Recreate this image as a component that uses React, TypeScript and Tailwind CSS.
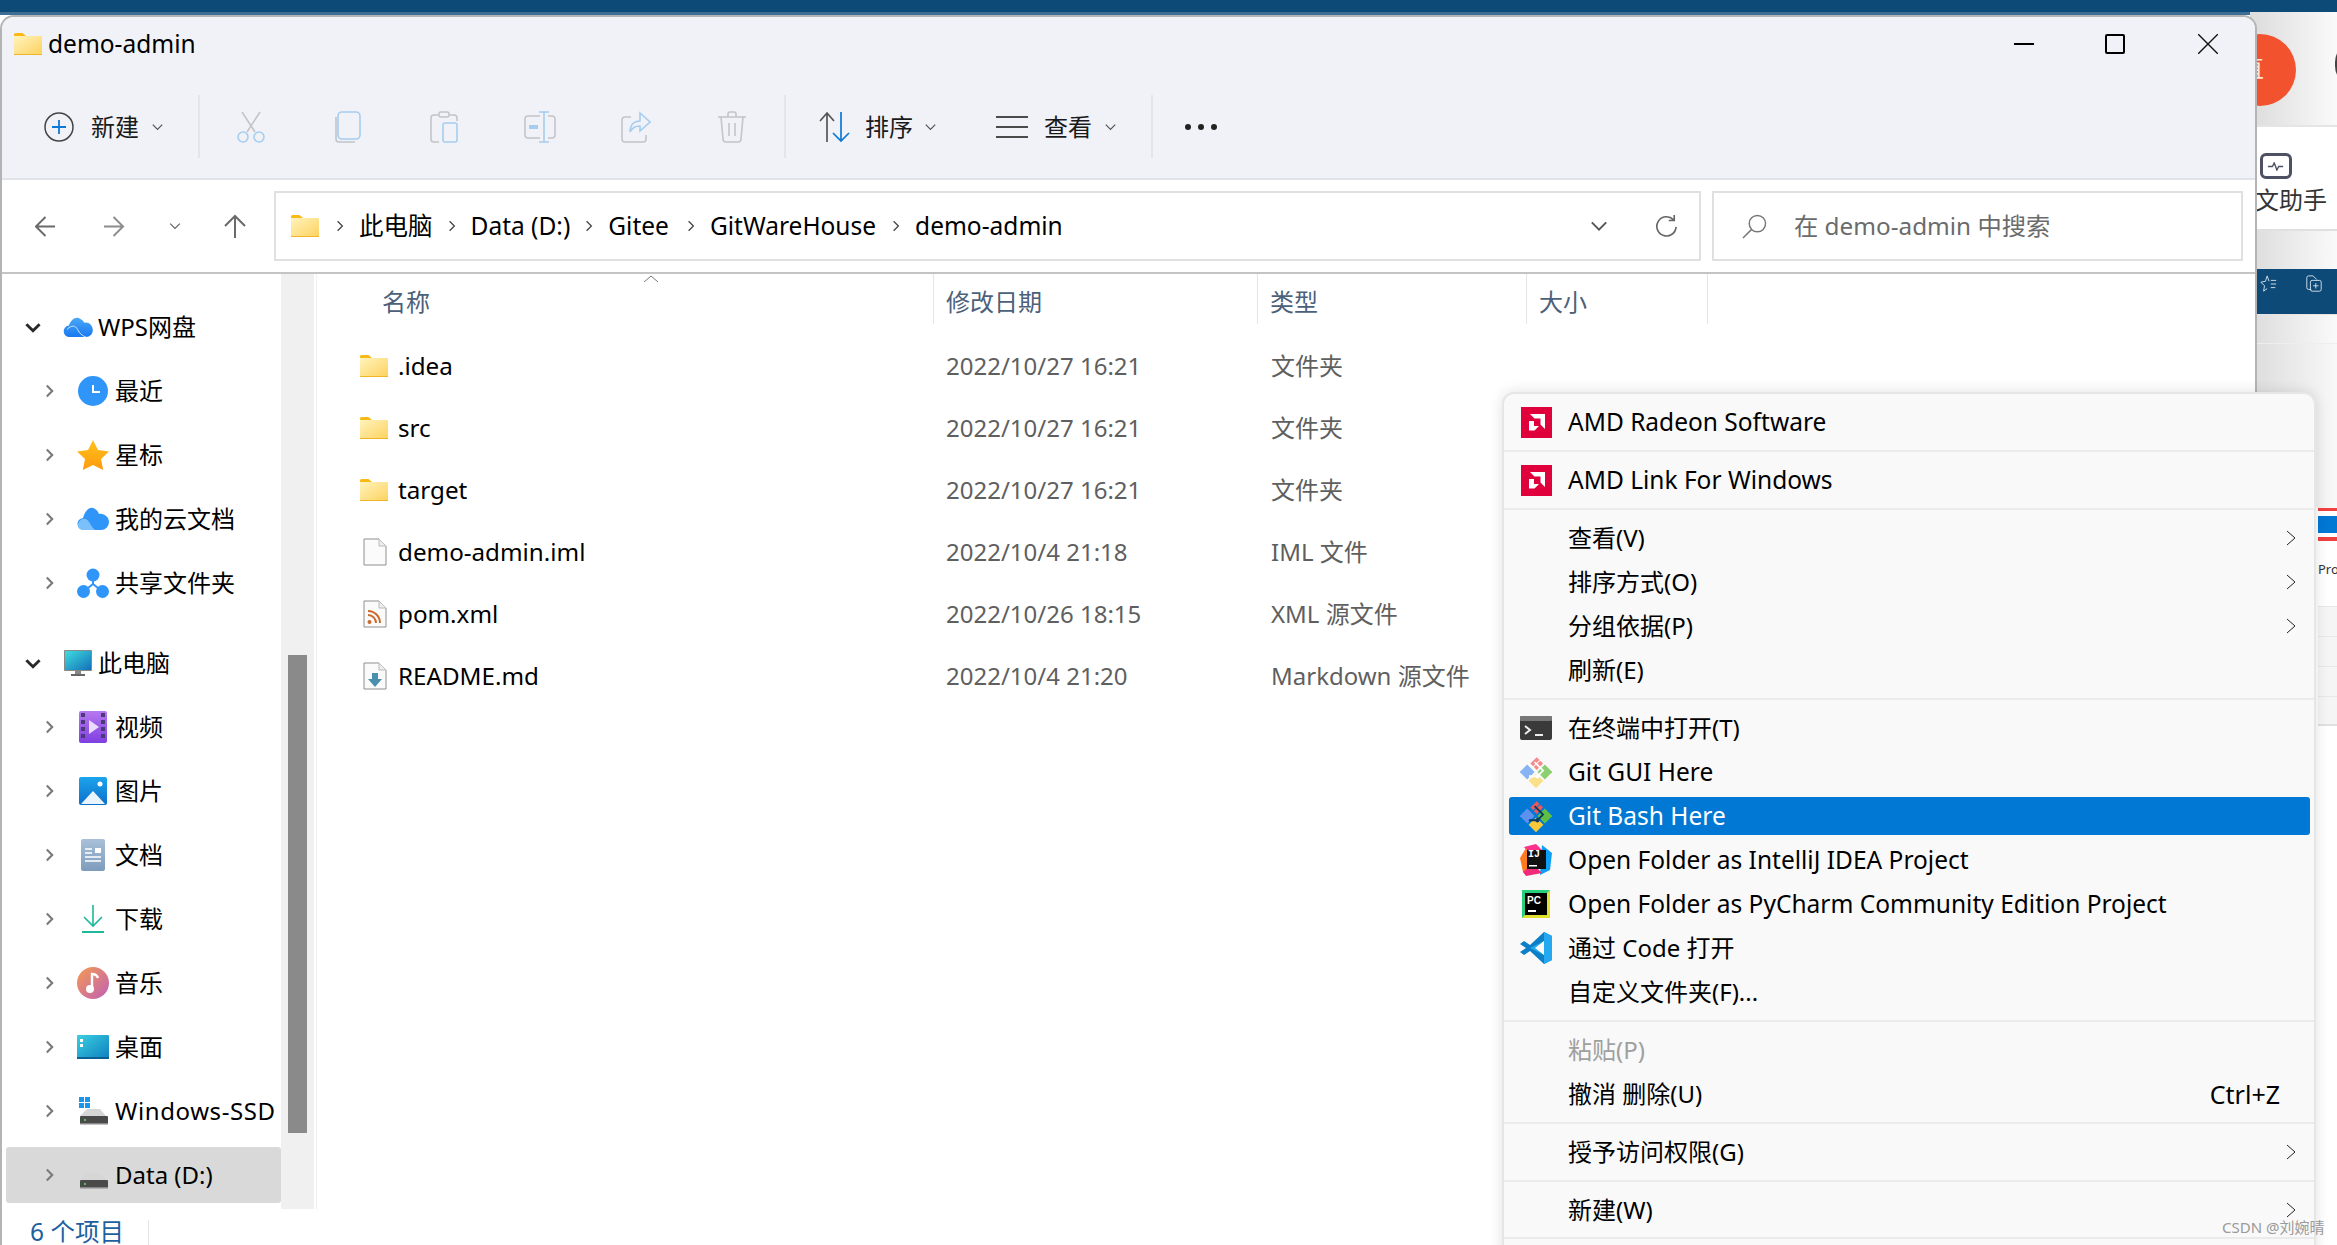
import { ReactNode } from 'react';

const sans = "font-['Noto_Sans','Noto_Sans_CJK_SC',sans-serif]";

function Folder({ className }: { className: string }) {
  return (
    <svg viewBox="0 0 28 22" className={className}>
      <defs>
        <linearGradient id="folderFill" x1="0" y1="0" x2="1" y2="1">
          <stop offset="0" stopColor="#fff3bd" />
          <stop offset="1" stopColor="#fdd25e" />
        </linearGradient>
      </defs>
      <path d="M0 1.5A1.5 1.5 0 0 1 1.5 0h7L12 3H0z" fill="#fbb916" />
      <rect x="0" y="3" width="28" height="19" rx="1" fill="url(#folderFill)" />
      <rect x="0" y="21" width="28" height="1" fill="#f0b429" />
    </svg>
  );
}

function Chevron({ dir = 'right', className = '' }: { dir?: 'right' | 'down'; className?: string }) {
  const d = dir === 'right' ? 'M2 1l6 6-6 6' : 'M1 2l6 6 6-6';
  return (
    <svg viewBox={dir === 'right' ? '0 0 10 14' : '0 0 14 10'} className={className} fill="none" stroke="currentColor" strokeWidth="1.6">
      <path d={d} />
    </svg>
  );
}

/* toolbar drawings */
const faded = '#c2c4c8';
const fadedBlue = '#a5cdf0';

function Cut() {
  return (
    <svg viewBox="0 0 28 32" className="w-[28px] h-[32px]" fill="none" strokeWidth="1.6">
      <path d="M5 1l13 20M23 1L10 21" stroke={faded} />
      <circle cx="6" cy="26" r="5" stroke={fadedBlue} />
      <circle cx="22" cy="26" r="5" stroke={fadedBlue} />
    </svg>
  );
}
function CopyIcon() {
  return (
    <svg viewBox="0 0 26 32" className="w-[26px] h-[32px]" fill="none" strokeWidth="1.6">
      <path d="M1 6v22a3 3 0 0 0 3 3h16" stroke={faded} />
      <rect x="3" y="1" width="22" height="27" rx="4" stroke={fadedBlue} />
    </svg>
  );
}
function PasteIcon() {
  return (
    <svg viewBox="0 0 28 32" className="w-[28px] h-[32px]" fill="none" strokeWidth="1.6">
      <path d="M8 4H4a3 3 0 0 0-3 3v21a3 3 0 0 0 3 3h5M20 4h4a3 3 0 0 1 3 3v3" stroke={faded} />
      <rect x="9" y="1" width="10" height="5" rx="2" stroke={faded} />
      <rect x="13" y="12" width="14" height="19" rx="2" stroke={fadedBlue} />
    </svg>
  );
}
function RenameIcon() {
  return (
    <svg viewBox="0 0 32 32" className="w-[32px] h-[32px]" fill="none" strokeWidth="1.6">
      <path d="M16 5H4a3 3 0 0 0-3 3v16a3 3 0 0 0 3 3h12M24 5h4a3 3 0 0 1 3 3v16a3 3 0 0 1-3 3h-4" stroke={faded} />
      <path d="M20 1v30M15 1h10M15 31h10" stroke={fadedBlue} />
      <rect x="5" y="14" width="9" height="4" fill={fadedBlue} />
    </svg>
  );
}
function ShareIcon() {
  return (
    <svg viewBox="0 0 30 32" className="w-[30px] h-[32px]" fill="none" strokeWidth="1.6">
      <path d="M10 6H4a3 3 0 0 0-3 3v19a3 3 0 0 0 3 3h18a3 3 0 0 0 3-3v-4" stroke={faded} />
      <path d="M19 2l10 9-10 9v-5c-5 0-8 2-10 6 0-7 4-11 10-11z" stroke={fadedBlue} />
    </svg>
  );
}
function TrashIcon() {
  return (
    <svg viewBox="0 0 30 32" className="w-[30px] h-[32px]" fill="none" stroke={faded} strokeWidth="1.6">
      <path d="M1 6h28M11 6V3a2 2 0 0 1 2-2h4a2 2 0 0 1 2 2v3M4 6l2 22a3 3 0 0 0 3 3h12a3 3 0 0 0 3-3l2-22M12 12v13M18 12v13" />
    </svg>
  );
}

function ToolSlot({ children, w }: { children: ReactNode; w: string }) {
  return <div className={`flex items-center justify-center ${w}`}>{children}</div>;
}

function ToolDivider() {
  return <div className="w-[2px] h-[63px] bg-[#e3e5ea]" />;
}

function Toolbar() {
  return (
    <div className="h-[109px] pt-[4px] shrink-0 flex items-center bg-[#f0f2f8] border-b-2 border-[#e1e3e8] text-[#1a1a1a]">
      <svg viewBox="0 0 30 30" className="ml-[42px] w-[30px] h-[30px]" fill="none">
        <circle cx="15" cy="15" r="14" stroke="#444" strokeWidth="1.5" />
        <path d="M15 8v14M8 15h14" stroke="#0a78d4" strokeWidth="1.8" />
      </svg>
      <span className="ml-[17px] text-[24px] leading-none">新建</span>
      <Chevron dir="down" className="ml-[13px] w-[11px] h-[8px] text-[#555]" />
      <div className="ml-[35px]"><ToolDivider /></div>
      <div className="ml-[21px] flex items-center">
        <ToolSlot w="w-[60px]"><Cut /></ToolSlot>
        <ToolSlot w="w-[96px] ml-[19px]"><CopyIcon /></ToolSlot>
        <ToolSlot w="w-[96px]"><PasteIcon /></ToolSlot>
        <ToolSlot w="w-[96px]"><RenameIcon /></ToolSlot>
        <ToolSlot w="w-[96px]"><ShareIcon /></ToolSlot>
        <ToolSlot w="w-[96px]"><TrashIcon /></ToolSlot>
      </div>
      <div className="ml-[4px]"><ToolDivider /></div>
      <svg viewBox="0 0 32 32" className="ml-[32px] w-[32px] h-[32px]" fill="none" strokeWidth="1.7">
        <path d="M9 31V2M2 10l7-8 7 8" stroke="#555" />
        <path d="M23 1v29M15 22l8 8 8-8" stroke="#0a78d4" />
      </svg>
      <span className="ml-[15px] text-[24px] leading-none">排序</span>
      <Chevron dir="down" className="ml-[12px] w-[11px] h-[8px] text-[#555]" />
      <svg viewBox="0 0 32 22" className="ml-[60px] w-[32px] h-[22px]" stroke="#4b4b4b" strokeWidth="1.8">
        <path d="M0 1h32M0 11h32M0 21h32" />
      </svg>
      <span className="ml-[16px] text-[24px] leading-none">查看</span>
      <Chevron dir="down" className="ml-[13px] w-[11px] h-[8px] text-[#555]" />
      <div className="ml-[35px]"><ToolDivider /></div>
      <div className="ml-[32px] flex gap-[7px]">
        <div className="w-[6px] h-[6px] rounded-full bg-[#222]" />
        <div className="w-[6px] h-[6px] rounded-full bg-[#222]" />
        <div className="w-[6px] h-[6px] rounded-full bg-[#222]" />
      </div>
    </div>
  );
}

function Arrow({ dir, color, className }: { dir: 'left' | 'right' | 'up'; color: string; className: string }) {
  const d = dir === 'left' ? 'M21 11H2M11 1L1 11l10 10' : dir === 'right' ? 'M0 11h19M10 1l10 10-10 10' : 'M11 24V2M1 12L11 2l10 10';
  return (
    <svg viewBox={dir === 'up' ? '0 0 22 24' : '0 0 22 22'} className={className} fill="none" stroke={color} strokeWidth="2">
      <path d={d} />
    </svg>
  );
}

function Crumb({ label, ml }: { label: string; ml: string }) {
  return (
    <>
      <Chevron className={`${ml} w-[8px] h-[12px] text-[#444]`} />
      <span className="ml-[15px] text-[24.5px] leading-none whitespace-nowrap">{label}</span>
    </>
  );
}

function AddressBar() {
  return (
    <div className="h-[94px] shrink-0 flex items-center bg-white border-b-2 border-[#c4c4c4]">
      <Arrow dir="left" color="#6a6a6a" className="ml-[33px] w-[21px] h-[21px]" />
      <Arrow dir="right" color="#8c8c8c" className="ml-[48px] w-[21px] h-[21px]" />
      <Chevron dir="down" className="ml-[44px] w-[12px] h-[8px] text-[#666]" />
      <Arrow dir="up" color="#6a6a6a" className="ml-[43px] w-[22px] h-[24px]" />
      <div className="ml-[28px] w-[1427px] h-[70px] border-2 border-[#e0e0e0] flex items-center text-black">
        <Folder className="ml-[15px] w-[28px] h-[22px]" />
        <Crumb label="此电脑" ml="ml-[17px]" />
        <Crumb label="Data (D:)" ml="ml-[15px]" />
        <Crumb label="Gitee" ml="ml-[15px]" />
        <Crumb label="GitWareHouse" ml="ml-[18px]" />
        <Crumb label="demo-admin" ml="ml-[16px]" />
        <div className="flex-1" />
        <Chevron dir="down" className="w-[20px] h-[12px] text-[#555]" />
        <svg viewBox="0 0 24 26" className="ml-[46px] mr-[22px] w-[22px] h-[24px]" fill="none" stroke="#666" strokeWidth="1.8">
          <path d="M20 6a10.5 10.5 0 1 0 3 8M21 1v6h-6" />
        </svg>
      </div>
      <div className="ml-[11px] w-[531px] h-[70px] border-2 border-[#e0e0e0] flex items-center text-[#6b6b6b]">
        <svg viewBox="0 0 26 26" className="ml-[28px] w-[25px] h-[25px]" fill="none" stroke="#777" strokeWidth="1.5">
          <circle cx="16" cy="10" r="8.5" />
          <path d="M10 16L1 25" />
        </svg>
        <span className="ml-[27px] text-[24.3px] leading-none whitespace-nowrap">在 demo-admin 中搜索</span>
      </div>
    </div>
  );
}

/* sidebar drawings */
function WpsCloud() {
  return (
    <svg viewBox="0 0 32 22" className="w-[31px] h-[21px]">
      <defs>
        <linearGradient id="wpsCloud" x1="0" y1="0" x2="0" y2="1">
          <stop offset="0" stopColor="#4aa8f8" />
          <stop offset="1" stopColor="#1878f0" />
        </linearGradient>
      </defs>
      <path d="M7 21a6 6 0 0 1-1-12C8 3 12 0 16 1c3 1 5 3 6 5 5-1 9 3 9 8a7 7 0 0 1-7 7z" fill="url(#wpsCloud)" />
      <path d="M4 13c5-5 9-4 11 0s5 7 9 8" stroke="#cfe6fd" strokeWidth="1" fill="none" />
    </svg>
  );
}
function Clock() {
  return (
    <svg viewBox="0 0 30 30" className="w-[30px] h-[30px]">
      <circle cx="15" cy="15" r="15" fill="#2f95f8" />
      <path d="M15 9v7h7" stroke="#fff" strokeWidth="2" fill="none" />
    </svg>
  );
}
function Star() {
  return (
    <svg viewBox="0 0 32 32" className="w-[32px] h-[32px]">
      <defs>
        <linearGradient id="starFill" x1="0" y1="0" x2="0" y2="1">
          <stop offset="0" stopColor="#ffc21e" />
          <stop offset="1" stopColor="#ff9a0c" />
        </linearGradient>
      </defs>
      <path d="M16 1l5 10 11 1.500-8 7.500 2.200 11L16 26l-10.200 5L8 20 0 12.500 11 11z" fill="url(#starFill)" strokeLinejoin="round" />
    </svg>
  );
}
function DocsCloud() {
  return (
    <svg viewBox="0 0 32 24" className="w-[32px] h-[24px]">
      <path d="M7 23a6 6 0 0 1-1-12C8 4 12 0 16 1c3 1 5 3 6 6 5-1 10 3 10 8a8 8 0 0 1-8 8z" fill="#2f95f8" />
      <path d="M1 17c2-6 8-7 11-2s4 6 6 8H6a5 5 0 0 1-5-6z" fill="#7cc0fb" />
    </svg>
  );
}
function ShareNodes() {
  return (
    <svg viewBox="0 0 32 30" className="w-[32px] h-[30px]">
      <path d="M16 7v10M16 16L6 24M16 16l10 8" stroke="#2f95f8" strokeWidth="2" />
      <circle cx="16" cy="7" r="6.500" fill="#2f95f8" />
      <circle cx="6.500" cy="23.500" r="6.500" fill="#2f95f8" />
      <circle cx="25.500" cy="23.500" r="6.500" fill="#2f95f8" />
    </svg>
  );
}
function Monitor() {
  return (
    <svg viewBox="0 0 28 26" className="w-[28px] h-[26px]">
      <defs>
        <linearGradient id="screenFill" x1="0" y1="0" x2="1" y2="1">
          <stop offset="0" stopColor="#3fdde0" />
          <stop offset="1" stopColor="#1270b8" />
        </linearGradient>
      </defs>
      <rect x="0" y="0" width="28" height="21" rx="1" fill="#888" />
      <rect x="1" y="1" width="26" height="19" fill="url(#screenFill)" />
      <rect x="11" y="21" width="6" height="3" fill="#888" />
      <rect x="7" y="24" width="14" height="2" fill="#666" />
    </svg>
  );
}
function Video() {
  return (
    <svg viewBox="0 0 28 32" className="w-[28px] h-[32px]">
      <defs>
        <linearGradient id="videoFill" x1="0" y1="0" x2="0" y2="1">
          <stop offset="0" stopColor="#b678f0" />
          <stop offset="1" stopColor="#7f3fe0" />
        </linearGradient>
      </defs>
      <rect width="28" height="32" rx="2" fill="url(#videoFill)" />
      {[2, 9, 16, 23].map((y) => (
        <g key={y} fill="#4a3a78">
          <rect x="2" y={y} width="4" height="4" />
          <rect x="22" y={y} width="4" height="4" />
        </g>
      ))}
      <path d="M10 9l10 7-10 7z" fill="#eadcfb" />
    </svg>
  );
}
function Picture() {
  return (
    <svg viewBox="0 0 28 28" className="w-[28px] h-[28px]">
      <defs>
        <linearGradient id="picFill" x1="0" y1="0" x2="0" y2="1">
          <stop offset="0" stopColor="#1ca4ee" />
          <stop offset="1" stopColor="#0c6fc8" />
        </linearGradient>
      </defs>
      <rect width="28" height="28" rx="2" fill="url(#picFill)" />
      <circle cx="21" cy="7" r="2.500" fill="#fff" />
      <path d="M2 27l12-13 12 13z" fill="#eaf5fd" />
    </svg>
  );
}
function DocIcon() {
  return (
    <svg viewBox="0 0 24 32" className="w-[24px] h-[32px]">
      <defs>
        <linearGradient id="docFill" x1="0" y1="0" x2="0" y2="1">
          <stop offset="0" stopColor="#a9c0d8" />
          <stop offset="1" stopColor="#7d9cbc" />
        </linearGradient>
      </defs>
      <rect width="24" height="32" rx="2" fill="url(#docFill)" />
      <rect x="14" y="9" width="6" height="5" fill="#fff" />
      <path d="M4 10h7M4 14h7M4 18h16M4 22h16" stroke="#fff" strokeWidth="1.6" />
    </svg>
  );
}
function Download() {
  return (
    <svg viewBox="0 0 22 28" className="w-[22px] h-[28px]" fill="none" stroke="#1fb89a" strokeWidth="1.6">
      <path d="M11 0v21M2 12l9 9 9-9" />
      <path d="M0 27h22" strokeWidth="2" />
    </svg>
  );
}
function Music() {
  return (
    <svg viewBox="0 0 32 32" className="w-[32px] h-[32px]">
      <defs>
        <linearGradient id="musicFill" x1="0" y1="0" x2="1" y2="1">
          <stop offset="0" stopColor="#f59b50" />
          <stop offset="1" stopColor="#c05fb8" />
        </linearGradient>
      </defs>
      <circle cx="16" cy="16" r="16" fill="url(#musicFill)" />
      <circle cx="13" cy="22" r="4" fill="#fff" />
      <path d="M15 22V7c3 0 5 1 6 4" stroke="#fff" strokeWidth="2.400" fill="none" />
    </svg>
  );
}
function Desktop() {
  return (
    <svg viewBox="0 0 32 24" className="w-[32px] h-[24px]">
      <defs>
        <linearGradient id="deskFill" x1="0" y1="0" x2="1" y2="1">
          <stop offset="0" stopColor="#39d0e0" />
          <stop offset="1" stopColor="#0f7ec0" />
        </linearGradient>
      </defs>
      <rect width="32" height="24" rx="1" fill="url(#deskFill)" />
      <rect y="22" width="32" height="2" fill="#0b5f92" />
      <rect x="3" y="4" width="3" height="3" fill="#fff" />
      <rect x="3" y="9" width="3" height="3" fill="#fff" />
    </svg>
  );
}
function Drive({ win }: { win?: boolean }) {
  return (
    <svg viewBox="0 0 30 28" className="w-[30px] h-[28px]">
      <path d="M9 12h13l6 7H2z" fill="#d6d6d6" />
      <rect x="2" y="19" width="28" height="8" rx="1" fill="#4a4a4a" />
      <rect x="2" y="26" width="28" height="1.500" fill="#888" />
      <circle cx="7" cy="23" r="1" fill="#5fe05f" />
      {win && (
        <g fill="#1c96ea">
          <rect x="1" y="0" width="5" height="5" />
          <rect x="7" y="0" width="5" height="5" />
          <rect x="1" y="6" width="5" height="5" />
          <rect x="7" y="6" width="5" height="5" />
        </g>
      )}
    </svg>
  );
}

function TreeRow({ icon, label, selected, wide }: { icon: ReactNode; label: string; selected?: boolean; wide?: boolean }) {
  return (
    <div className="h-[64px] flex items-center relative text-black">
      {selected && <div className="absolute left-[4px] right-0 top-[4px] bottom-[4px] rounded-[3px] bg-[#d9d9d9]" />}
      <Chevron className="relative ml-[43px] w-[9px] h-[14px] text-[#7c7c7c] [stroke-width:2.4]" />
      <div className="relative ml-[20px] w-[38px] flex justify-center">{icon}</div>
      <span className={`relative ml-[3px] text-[24px] leading-none whitespace-nowrap ${wide ? 'tracking-[0.6px]' : ''}`}>{label}</span>
    </div>
  );
}

function TreeRoot({ icon, label }: { icon: ReactNode; label: string }) {
  return (
    <div className="h-[64px] flex items-center text-black">
      <Chevron dir="down" className="ml-[23px] w-[16px] h-[11px] text-[#2a2a2a] [stroke-width:2.6]" />
      <div className="ml-[21px] w-[32px] flex justify-center">{icon}</div>
      <span className="ml-[4px] text-[24px] leading-none whitespace-nowrap">{label}</span>
    </div>
  );
}

function Sidebar() {
  return (
    <div className="w-[279px] pt-[21px] shrink-0">
      <TreeRoot icon={<WpsCloud />} label="WPS网盘" />
      <TreeRow icon={<Clock />} label="最近" />
      <TreeRow icon={<Star />} label="星标" />
      <TreeRow icon={<DocsCloud />} label="我的云文档" />
      <TreeRow icon={<ShareNodes />} label="共享文件夹" />
      <div className="h-[16px]" />
      <TreeRoot icon={<Monitor />} label="此电脑" />
      <TreeRow icon={<Video />} label="视频" />
      <TreeRow icon={<Picture />} label="图片" />
      <TreeRow icon={<DocIcon />} label="文档" />
      <TreeRow icon={<Download />} label="下载" />
      <TreeRow icon={<Music />} label="音乐" />
      <TreeRow icon={<Desktop />} label="桌面" />
      <TreeRow icon={<Drive win />} label="Windows-SSD" wide />
      <TreeRow icon={<Drive />} label="Data (D:)" selected />
    </div>
  );
}

/* file type drawings */
function PlainFile({ children }: { children?: ReactNode }) {
  return (
    <svg viewBox="0 0 24 28" className="ml-[3px] w-[24px] h-[28px]">
      <path d="M1 1h15l7 7v19H1z" fill="#fbfbfb" stroke="#8f8f8f" />
      <path d="M16 1v7h7" fill="#eee" stroke="#bbb" />
      {children}
    </svg>
  );
}

const files: { name: string; date: string; type: string; icon: ReactNode }[] = [
  { name: '.idea', date: '2022/10/27 16:21', type: '文件夹', icon: <Folder className="w-[28px] h-[22px]" /> },
  { name: 'src', date: '2022/10/27 16:21', type: '文件夹', icon: <Folder className="w-[28px] h-[22px]" /> },
  { name: 'target', date: '2022/10/27 16:21', type: '文件夹', icon: <Folder className="w-[28px] h-[22px]" /> },
  { name: 'demo-admin.iml', date: '2022/10/4 21:18', type: 'IML 文件', icon: <PlainFile /> },
  {
    name: 'pom.xml',
    date: '2022/10/26 18:15',
    type: 'XML 源文件',
    icon: (
      <PlainFile>
        <circle cx="6.500" cy="22" r="2" fill="#c96a30" />
        <path d="M5 15a8 8 0 0 1 8 8M5 11a12 12 0 0 1 12 12" stroke="#c96a30" strokeWidth="2" fill="none" />
      </PlainFile>
    ),
  },
  {
    name: 'README.md',
    date: '2022/10/4 21:20',
    type: 'Markdown 源文件',
    icon: (
      <PlainFile>
        <path d="M9 11h6v6h4l-7 8-7-8h4z" fill="#4a8fae" />
      </PlainFile>
    ),
  },
];

function HeaderCell({ label, w, pl }: { label: string; w: string; pl: string }) {
  return (
    <div className={`${w} ${pl} pt-[5px] h-full border-r border-[#e5e5e5] flex items-center text-[24px] text-[#4c607a] whitespace-nowrap`}>
      {label}
    </div>
  );
}

function FileList() {
  return (
    <div className="flex-1 ml-[2px] border-l border-[#f0f0f0] relative">
      <svg viewBox="0 0 14 7" className="absolute left-[327px] top-[1px] w-[14px] h-[7px]" fill="none" stroke="#777">
        <path d="M0 7l7-6 7 6" />
      </svg>
      <div className="h-[50px] flex">
        <HeaderCell label="名称" w="w-[617px]" pl="pl-[65px]" />
        <HeaderCell label="修改日期" w="w-[324px]" pl="pl-[12px]" />
        <HeaderCell label="类型" w="w-[269px]" pl="pl-[12px]" />
        <HeaderCell label="大小" w="w-[181px]" pl="pl-[12px]" />
      </div>
      <div className="mt-[11px]">
        {files.map((f) => (
          <div key={f.name} className="h-[62px] flex items-center">
            <div className="w-[81px] flex justify-end shrink-0">
              <div className="w-[38px] flex justify-start">{f.icon}</div>
            </div>
            <span className="w-[548px] text-[24.2px] leading-none text-black">{f.name}</span>
            <span className="w-[325px] text-[24px] leading-none text-[#5f5f5f]">{f.date}</span>
            <span className="text-[24px] leading-none text-[#5f5f5f] whitespace-nowrap">{f.type}</span>
          </div>
        ))}
      </div>
    </div>
  );
}

/* context menu drawings */
function AmdIcon() {
  return (
    <svg viewBox="0 0 31 31" className="w-[31px] h-[31px]">
      <rect width="31" height="31" fill="#e0003c" />
      <path d="M9 7h15v15l-4.500-4.500V11.500H13.500zM8 14l5 0v5h5l-4.500 4.500H8z" fill="#fff" />
    </svg>
  );
}
function TerminalIcon() {
  return (
    <svg viewBox="0 0 32 24" className="w-[32px] h-[24px]">
      <rect width="32" height="24" rx="2" fill="#3a3a3a" />
      <rect width="32" height="5" rx="1" fill="#777" />
      <path d="M5 10l5 4-5 4" stroke="#eee" strokeWidth="2" fill="none" />
      <path d="M15 19h8" stroke="#eee" strokeWidth="2" />
    </svg>
  );
}
function GitIcon({ dark }: { dark?: boolean }) {
  const top = dark ? '#ea5a5a' : '#f58a8a';
  const left = dark ? '#5c92ee' : '#86b4f4';
  const right = dark ? '#5fbf45' : '#8bd070';
  const bottom = dark ? '#f5c93a' : '#fbe08a';
  const line = dark ? '#0b3a5e' : '#ffffff';
  return (
    <svg viewBox="0 0 32 32" className="w-[32px] h-[32px]">
      <g transform="rotate(45 16 16)">
        <rect x="6" y="5" width="4" height="9" fill={top} />
        <rect x="11" y="5" width="4" height="9" fill={top} />
        <rect x="17" y="4.500" width="10.500" height="10.500" fill={right} />
        <rect x="4.500" y="17" width="10.500" height="10.500" fill={left} />
        <rect x="17" y="17" width="10.500" height="10.500" fill={bottom} />
        <path d="M8 10h12v8M20 18l-6 6" stroke={line} strokeWidth="1.800" fill="none" />
        <circle cx="20" cy="18" r="2.200" fill={line} />
      </g>
    </svg>
  );
}
function IdeaIcon() {
  return (
    <div className="relative w-[32px] h-[32px]">
      <svg viewBox="0 0 32 32" className="w-[32px] h-[32px]">
        <path d="M4 3l12-3 6 6-8 10z" fill="#fc318c" />
        <path d="M22 1l10 8-2 17-10 5z" fill="#0d9ef5" />
        <path d="M0 14l6-10 10 20-8 7-5-3z" fill="#fe7a1c" />
        <path d="M3 28l10-8 9 9-16 3z" fill="#f02a78" />
        <rect x="7" y="6" width="19" height="19" fill="#111" />
        <rect x="9" y="21" width="8" height="1.500" fill="#fff" />
      </svg>
      <span className="absolute left-[8px] top-[5px] text-[10px] leading-[12px] font-bold text-white font-['Liberation_Mono',monospace]">IJ</span>
    </div>
  );
}
function PycharmIcon() {
  return (
    <div className="relative w-[28px] h-[28px] border-[3px] border-t-[#27d07a] border-l-[#27d07a] border-r-[#e2e02e] border-b-[#e2e02e] bg-black">
      <span className="absolute left-[2px] top-[2px] text-[10px] leading-[11px] font-bold text-white font-['Liberation_Sans',sans-serif]">PC</span>
      <div className="absolute left-[3px] bottom-[3px] w-[8px] h-[2px] bg-white" />
    </div>
  );
}
function VsCodeIcon() {
  return (
    <svg viewBox="0 0 32 32" className="w-[32px] h-[32px]">
      <path d="M24 0l8 4v24l-8 4-14-13-6 4-4-3 6-4-6-4 4-3 6 4z" fill="#0d7fc6" />
      <path d="M24 0l8 4v24l-8 4zM10 16l14-7v14z" fill="#24a8f0" />
      <path d="M24 9v14l-9-7z" fill="#f9f9f9" />
    </svg>
  );
}

function MenuSection({ children, h }: { children: ReactNode; h: string }) {
  return <div className={`${h} flex flex-col justify-center border-b-2 border-[#ebebeb]`}>{children}</div>;
}

function MenuItem({
  icon,
  label,
  arrow,
  hint,
  active,
  muted,
  wide,
}: {
  icon?: ReactNode;
  label: string;
  arrow?: boolean;
  hint?: string;
  active?: boolean;
  muted?: boolean;
  wide?: boolean;
}) {
  return (
    <div className="h-[44px] flex items-center relative shrink-0">
      {active && <div className="absolute left-[5px] right-[4px] top-[3px] bottom-[3px] rounded-[3px] bg-[#0078d4]" />}
      <div className="relative ml-[16px] w-[32px] flex justify-center">{icon}</div>
      <span
        className={`relative ml-[16px] ${wide ? 'text-[24.5px]' : 'text-[24px]'} leading-none whitespace-nowrap ${
          active ? 'text-white' : muted ? 'text-[#a0a0a0]' : 'text-black'
        }`}
      >
        {label}
      </span>
      <div className="flex-1" />
      {hint && <span className="mr-[34px] text-[25px] leading-none text-black">{hint}</span>}
      {arrow && (
        <svg viewBox="0 0 10 16" className="mr-[18px] w-[10px] h-[16px]" fill="none" stroke="#222" strokeWidth="1">
          <path d="M1 1l8 7-8 7" />
        </svg>
      )}
    </div>
  );
}

function ContextMenu() {
  return (
    <div className="absolute left-[1502px] top-[392px] w-[814px] h-[870px] bg-[#f9f9f9] border-2 border-[#e6e6e6] rounded-[12px] shadow-[0_0_14px_rgba(0,0,0,0.12)] overflow-hidden">
      <MenuSection h="h-[58px]"><MenuItem icon={<AmdIcon />} label="AMD Radeon Software" wide /></MenuSection>
      <MenuSection h="h-[58px]"><MenuItem icon={<AmdIcon />} label="AMD Link For Windows" wide /></MenuSection>
      <MenuSection h="h-[190px]">
        <MenuItem label="查看(V)" arrow />
        <MenuItem label="排序方式(O)" arrow />
        <MenuItem label="分组依据(P)" arrow />
        <MenuItem label="刷新(E)" />
      </MenuSection>
      <MenuSection h="h-[322px]">
        <MenuItem icon={<TerminalIcon />} label="在终端中打开(T)" />
        <MenuItem icon={<GitIcon />} label="Git GUI Here" wide />
        <MenuItem icon={<GitIcon dark />} label="Git Bash Here" active wide />
        <MenuItem icon={<IdeaIcon />} label="Open Folder as IntelliJ IDEA Project" wide />
        <MenuItem icon={<PycharmIcon />} label="Open Folder as PyCharm Community Edition Project" wide />
        <MenuItem icon={<VsCodeIcon />} label="通过 Code 打开" />
        <MenuItem label="自定义文件夹(F)..." />
      </MenuSection>
      <MenuSection h="h-[102px]">
        <MenuItem label="粘贴(P)" muted />
        <MenuItem label="撤消 删除(U)" hint="Ctrl+Z" />
      </MenuSection>
      <MenuSection h="h-[58px]"><MenuItem label="授予访问权限(G)" arrow /></MenuSection>
      <MenuSection h="h-[57px]"><MenuItem label="新建(W)" arrow /></MenuSection>
    </div>
  );
}

function Explorer() {
  return (
    <div className="absolute left-0 top-[15px] w-[2257px] h-[1240px] flex flex-col bg-white border-l-2 border-r-2 border-t-2 border-[#b4b4b4] rounded-t-[14px] overflow-hidden">
      <div className="h-[54px] shrink-0 flex items-center bg-[#f1f2f8]">
        <Folder className="ml-[12px] w-[28px] h-[22px]" />
        <span className="ml-[6px] text-[24.5px] leading-none text-black">demo-admin</span>
        <div className="flex-1" />
        <div className="w-[20px] h-[2px] bg-black mr-[71px]" />
        <div className="w-[20px] h-[20px] border-2 border-black rounded-[2px] mr-[73px]" />
        <svg viewBox="0 0 20 20" className="w-[20px] h-[20px] mr-[37px]" fill="none" stroke="#111" strokeWidth="1.400">
          <path d="M0 0l20 20M20 0L0 20" />
        </svg>
      </div>
      <Toolbar />
      <AddressBar />
      <div className="flex h-[935px] shrink-0">
        <Sidebar />
        <div className="w-[33px] h-[935px] bg-[#f0f0f0] shrink-0 pt-[381px] pl-[7px]">
          <div className="w-[19px] h-[478px] bg-[#8a8a8a]" />
        </div>
        <FileList />
      </div>
      <div className="h-[46px] shrink-0 pt-[11px] flex items-start">
        <span className="ml-[28px] text-[24.5px] leading-none text-[#1e5fa0] whitespace-nowrap">6 个项目</span>
        <div className="ml-[24px] w-px h-[26px] bg-[#e5e5e5]" />
      </div>
    </div>
  );
}

/* the app showing behind the explorer window, only its right edge is visible */
function BackdropApp() {
  return (
    <div className="absolute left-[2250px] top-[12px] w-[87px] h-[1233px] flex flex-col bg-white">
      <div className="h-[115px] bg-gradient-to-r from-[#dcdcdc] to-[#fafafa] border-b-2 border-[#e5e5e5] relative">
        <div className="absolute left-[-26px] top-[22px] w-[72px] h-[72px] rounded-full bg-[#f2532e] text-[24px] leading-none text-[#fde3d8]">
          <span className="absolute left-[16px] top-[22px]">直</span>
        </div>
        <div className="absolute left-[85px] top-[30px] w-[40px] h-[44px] rounded-full border-[3px] border-[#444]" />
      </div>
      <div className="h-[104px] flex flex-col items-start border-b-2 border-[#e0e0e0] pl-[5px]">
        <div className="mt-[26px] ml-[5px] w-[32px] h-[26px] rounded-[6px] border-[3px] border-[#4e5164] flex items-center justify-center">
          <svg viewBox="0 0 20 10" className="w-[18px] h-[9px]" fill="none" stroke="#4e5164" strokeWidth="1.500">
            <path d="M1 5h5l2-4 3 8 2-4h5" />
          </svg>
        </div>
        <span className="mt-[9px] text-[24px] leading-none text-[#333] whitespace-nowrap">文助手</span>
      </div>
      <div className="h-[38px] bg-gradient-to-r from-[#dcdcdc] to-[#fafafa]" />
      <div className="h-[45px] bg-[#0d4a78] relative pl-[10px] pt-[6px] overflow-hidden">
        <div className="flex gap-[27px]">
          <svg viewBox="0 0 20 20" className="w-[18px] h-[18px]" fill="none" stroke="#dbe7f2" strokeWidth="1">
            <path d="M8 1l2 6h0M8 1L6 7 1 8l4 4-1 6 4-3M12 6h6M12 10h6M12 14h5" />
          </svg>
          <svg viewBox="0 0 20 20" className="w-[18px] h-[18px]" fill="none" stroke="#dbe7f2" strokeWidth="1">
            <path d="M7 16H4a2 2 0 0 1-2-2V3a2 2 0 0 1 2-2h5l4 4" />
            <rect x="6" y="6" width="12" height="12" rx="2" />
            <path d="M12 9v6M9 12h6" />
          </svg>
        </div>
      </div>
      <div className="h-[29px] bg-gradient-to-r from-[#dcdcdc] to-[#fafafa] border-t border-[#e5e5e5]" />
      <div className="h-[165px] bg-gradient-to-r from-[#dcdcdc] to-[#f8f8f8] border-t border-[#eeeeee]" />
      <div className="h-[33px] flex flex-col justify-between pl-[68px] bg-white">
        <div className="h-[3px] bg-[#f04040]" />
        <div className="h-[17px] bg-[#0078d4]" />
        <div className="h-[4px] bg-[#f04040]" />
      </div>
      <div className="h-[65px] pl-[68px] pt-[22px] text-[13px] leading-none text-[#333] overflow-hidden">Pro</div>
      <div className="pl-[68px]">
        <div className="h-[30px] border-t border-[#e8e8e8] bg-[#f5f5f5]" />
        <div className="h-[30px] border-t border-[#e8e8e8] bg-[#f5f5f5]" />
        <div className="h-[30px] border-t border-[#e8e8e8] bg-[#f5f5f5]" />
        <div className="h-[30px] border-t border-[#e8e8e8] bg-[#f5f5f5] border-b-2 border-b-[#e0e0e0]" />
      </div>
    </div>
  );
}

export default function App() {
  return (
    <div className={`relative w-[2337px] h-[1245px] overflow-hidden bg-white ${sans}`}>
      <div className="h-[12px] bg-[#0d4a78]" />
      <div className="h-[3px] bg-[#3d6f96]" />
      <BackdropApp />
      <Explorer />
      <ContextMenu />
      <div className="absolute left-[2222px] top-[1218px] text-[15px] leading-[18px] text-[#9a9a9a] whitespace-nowrap">CSDN @刘婉晴</div>
    </div>
  );
}
